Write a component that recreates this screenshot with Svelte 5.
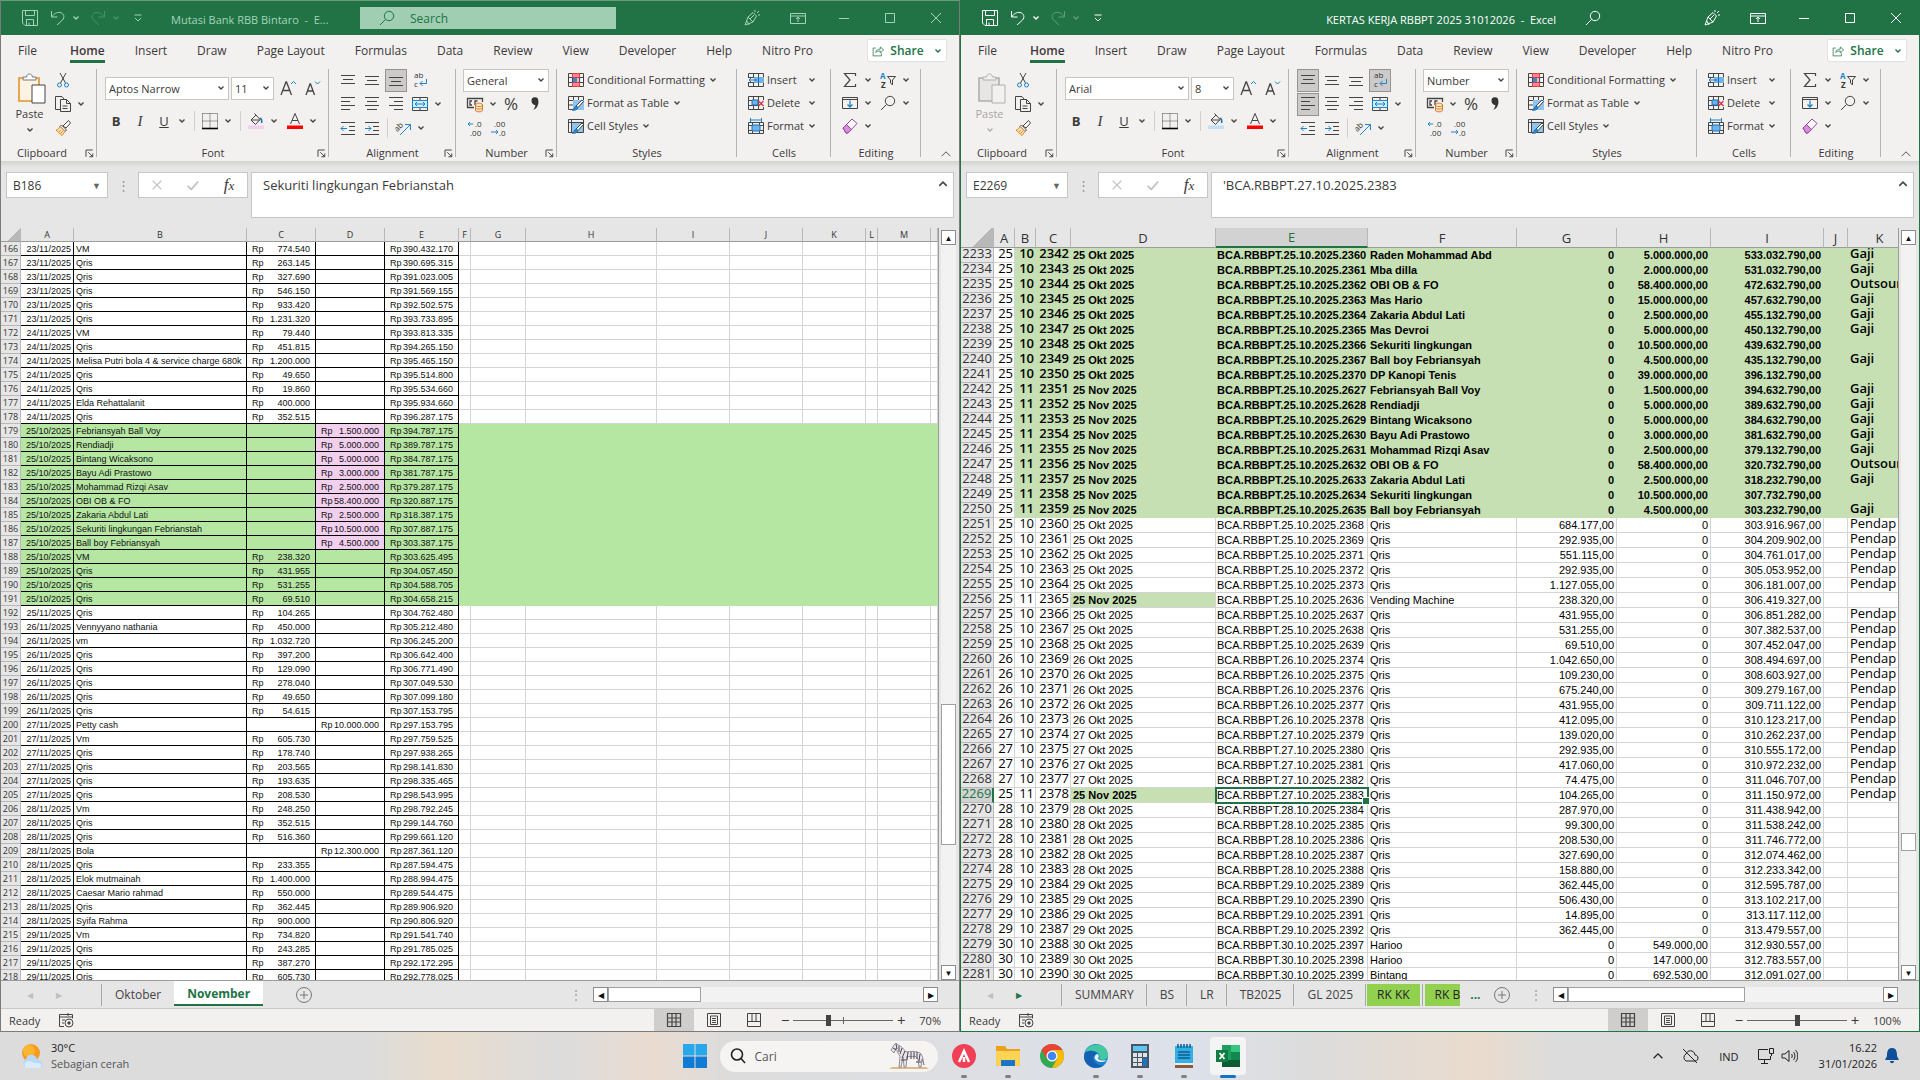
<script>
  const icons = {
    save: '<path d="M.5.5h15v15H3l-2.500-2.500zM3.500.500v5h9v-5M4.500 15.500v-6h7v6M7 12.500v3" />',
    undo: '<path d="M1.500 1v6h6M1.500 7C4 3.500 7 2 10 2.500c4 .500 5 5 2.500 7.500L7 15" />',
    redo: '<path d="M14.500 1v6h-6M14.500 7C12 3.500 9 2 6 2.500 2 3 1 7.500 3.500 10L9 15" />',
    customize: '<path d="M4.500 5h7M5 8l3 3 3-3" />',
    search: '<circle cx="10" cy="6" r="4.700" /><path d="M6.500 9.500 1 15" />',
    pen: '<path d="M1 15 4 7l5-4.500 3.500 3.500L9 12zM4 7l5 5M5 15l-2-4M11 0v2M13 3l2-2M14 5h2M6 9l4-4" />',
    display: '<path d="M.500 3.500h15v10H.500zM.500 6h15M8 12V7M6 9l2-2 2 2" />',
    min: '<path d="M3 8.500h10" />',
    max: '<path d="M3.500 3.500h9v9h-9z" />',
    close: '<path d="m3 3 10 10M13 3 3 13" />',
    share: '<path d="M5 4H1.500v10.500h11V11M5 10c.500-3 2.500-4.500 6-4.500V2.500l4.500 4-4.500 4V8C8.500 8 6.500 8.500 5 10z" />',
    cut: '<path d="m5 1 5.500 10M11 1 5.500 11" /><g stroke="#1e83c8"><circle cx="4.500" cy="13" r="2" /><circle cx="11.500" cy="13" r="2" /></g>',
    copy: '<path d="M5 13.500H.500V.500H7L9 3M5.500 3.500h6l4 4v8h-10zM11.500 3.500v4h4M7.500 10h5M7.500 12.500h5" />',
    brush: '<path d="m8 6 4-4 1.500-1.500L15.500 3 11 8zM6.500 5l5 5-1.500 1.500L5 6.500z" fill="#fff" /><path d="M5 6.500 10 11.500 7 15.500 1 10c2 0 3-1.500 4-3.500zM4 12l2-2M5.500 13.500 8 11" stroke="#e08a1e" fill="#fbe3c0" />',
    grow: '<path d="M1 15 6 2h.500L11.500 15M3 10.500h6.500" stroke-width="1.300" /><path d="m11 4 2.500-2.500L16 4" stroke="#1e83c8" />',
    shrink: '<path d="M2 15 6 4h.500L10.500 15M3.500 11h5.500" stroke-width="1.300" /><path d="M11 1.500 13.500 4 16 1.500" stroke="#1e83c8" />',
    borders: '<path d="M.500.500h15v15M.500.500v15M8 .500v15M.500 8h15" stroke-dasharray="1 1" /><path d="M0 15.500h16" stroke="#000" stroke-width="1.600" />',
    top: '<path d="M1 3.500h14M3 7.500h10M1 11.500h14" />',
    middle: '<path d="M1 4.500h14M3 8.500h10M1 12.500h14" />',
    bottom: '<path d="M1 5.500h14M3 9.500h10M1 13.500h14" />',
    left: '<path d="M1 1.500h14M1 5.500h9M1 9.500h14M1 13.500h9" />',
    center: '<path d="M1 1.500h14M3 5.500h10M1 9.500h14M3 13.500h10" />',
    right: '<path d="M1 1.500h14M6 5.500h9M1 9.500h14M6 13.500h9" />',
    outdent: '<path d="M1 2.500h14M9 6.500h6M9 10.500h6M1 14.500h14" /><path d="M7 8.500H1M3.500 6 1 8.500 3.500 11" stroke="#1e83c8" />',
    indent: '<path d="M1 2.500h14M9 6.500h6M9 10.500h6M1 14.500h14" /><path d="M1 8.500h6M4.500 6 7 8.500 4.500 11" stroke="#1e83c8" />',
    wrap: '<text x="2" y="6" class="glyph">ab</text><text x="2" y="15" class="glyph">c</text><path d="M14.500 7v4.500H8M10.500 9 8 11.500l2.500 2.500" stroke="#1e83c8" />',
    merge: '<path d="M.500 1.500h15v13H.500zM8 1.500v3M8 11.500v3" /><path d="M.500 4.500h15v7H.500z" fill="#d5ebfa" stroke="#1e83c8" /><path d="M3 8h10M5 6 3 8l2 2M11 6l2 2-2 2" stroke="#1e83c8" />',
    orient: '<text x="0" y="9" class="glyph" transform="rotate(-45 5 8)">ab</text><path d="M5 15 15 5M10 4.500h5.500V10" stroke="#1e83c8" />',
    money: '<path d="M15.500 6V2.500H.500v9H7M5 5H3v4h2M8 9V5h2.500" stroke-width="1.300" /><path d="M8.500 9c0-2.500 7-2.500 7 0v5c0 2.500-7 2.500-7 0zM8.500 9c0 2 7 2 7 0M8.500 11.500c0 2 7 2 7 0" stroke="#e07b1a" fill="#fde1c2" />',
    comma: '<path d="M4.500 5a3.300 3.300 0 0 1 6.800-.500c.700 4-1.300 8-5 9.500 1.500-2 2-3.500 2-5-2.300 0-3.800-1.800-3.800-4z" fill="#333" stroke="none" />',
    incdec: '<path d="M6 4H1M3 2 1 4l2 2" stroke="#1e83c8" /><text x="8" y="7" class="glyph">.0</text><text x="3" y="16" class="glyph">.00</text>',
    decdec: '<text x="3" y="7" class="glyph">.00</text><text x="8" y="16" class="glyph">.0</text><path d="M0 12h7M5 10l2 2-2 2" stroke="#1e83c8" />',
    cond: '<path d="M4 1h8v14H4z" fill="#f8b9bc" stroke="none" /><path d="M.500 1.500h15v13H.500zM4.500 1.500v13M11.500 1.500v13M.500 5.500h15M.500 10.500h15" /><path d="M4.500 1.500h7v4h-7zM4.500 10.500h7v4h-7z" stroke="#e03a45" fill="#f58b91" /><path d="M5 6h4v4H5z" fill="#3c87c9" stroke="none" />',
    table: '<path d="M.500 1.500h15v13H.500zM5.500 1.500v13M10.500 1.500v13M.500 5.500h15M.500 10h15" /><path d="M5 5h11v10H5z" fill="#8fc4ec" stroke="none" /><path d="m8 11 6-6 1.500 1.500L10 12.500z" fill="#fff" /><path d="M4 15c2 0 2-3 4-4l2 1.500C9 15 7 15.500 4 15z" fill="#3c87c9" stroke="#1e6bb0" />',
    cells: '<path d="M.500 1.500h15v13H.500zM3.500 1.500v13M.500 4.500h15" /><path d="M4 5h11v9H4z" fill="#8fc4ec" stroke="none" /><path d="m8 11 6-6 1.500 1.500L10 12.500z" fill="#fff" /><path d="M4 15c2 0 2-3 4-4l2 1.500C9 15 7 15.500 4 15z" fill="#3c87c9" stroke="#1e6bb0" />',
    insert: '<path d="M.500 1.500h15v13H.500zM5.500 1.500v13M10.500 1.500v13M.500 5.500h15M.500 10.500h15" /><path d="M6 5h10v6H6z" fill="#6db3ea" stroke="none" /><path d="M0 6h6v4H0z" fill="#f3f1f0" stroke="none" /><path d="M9 8H1M3.500 5.500 1 8l2.500 2.500M10.500 5v6" stroke="#1e6fb8" />',
    delete: '<path d="M15.500 5V1.500H.500v13h15V12M5.500 1.500v13M10.500 1.500v13M.500 5.500h10M.500 10.500h10" /><path d="M4 5h6v5H4z" fill="#6db3ea" stroke="#1e6fb8" /><path d="m10.500 6 5 5M15.500 6l-5 5" stroke="#e03a45" stroke-width="1.500" />',
    format: '<path d="M.500 4.500h15v11H.500zM4.500 4.500v11M11.500 4.500v11M.500 7.500h15M.500 12.500h15" /><path d="M4 7h8v6H4z" fill="#6db3ea" stroke="#1e6fb8" /><path d="M2.500 0v4M13.500 0v4M2.500 2h11" stroke="#1e83c8" />',
    sum: '<path d="M13.500 4V1.500h-11L8 8l-5.500 6.500h11V12" stroke-width="1.200" />',
    filldown: '<path d="M.500 2.500h15v11H.500zM.500 4.500h15" /><path d="M8 5.500v6M5.500 9.500 8 12l2.500-2.500" stroke="#1e83c8" stroke-width="1.300" />',
    eraser: '<path d="M1 10 10 1l5 4.500L6 15H4z" fill="#fff" stroke="#9b3fa5" /><path d="M1 10l3.500-3.500 5 5L6 15H4z" fill="#d48fd8" stroke="#9b3fa5" />',
    sort: '<text x="0" y="7" class="glyph blue">A</text><text x="1" y="16" class="glyph bold">Z</text><path d="M7.500 4.500h8L12.500 8v5L10.500 11V8z" />',
    launcher: '<path d="M4 13V4h9M7 7l6 6M13 8.500V13H8.500" />',
    macro: '<path d="M6 14.500H1.500v-12h13v4M1.500 5h13M4 8h3M4 11h2M10 1v3" /><circle cx="11" cy="11" r="4" /><circle cx="11" cy="11" r="1.200" fill="#444" />',
    normal: '<path d="M1.500 1.500h13v13h-13zM6 1.500v13M10 1.500v13M1.500 6h13M1.500 10h13" stroke-width="1.200" />',
    layout: '<path d="M1.500 1.500h13v13h-13zM4.500 4h7v8.500h-7zM6 6.500h4M6 8.500h4M6 10.500h4" />',
    pagebreak: '<path d="M1.500 1.500h13v13h-13zM6 1.500v8h4v-8M1.500 9.500h13" />',
    up: '<path d="m3 10.500 5-5 5 5" />',
    x: '<path d="m3 3 10 10M13 3 3 13" stroke-width="1.600" />',
    check: '<path d="m2 9 4 4 8-9" stroke-width="2" />'
  };

  const tabs = ['File', 'Home', 'Insert', 'Draw', 'Page Layout', 'Formulas', 'Data', 'Review', 'View', 'Developer', 'Help', 'Nitro Pro'];

  // date | description | credit | debit | balance
  const mutasi = `23/11/2025|VM|774.540||390.432.170
23/11/2025|Qris|263.145||390.695.315
23/11/2025|Qris|327.690||391.023.005
23/11/2025|Qris|546.150||391.569.155
23/11/2025|Qris|933.420||392.502.575
23/11/2025|Qris|1.231.320||393.733.895
24/11/2025|VM|79.440||393.813.335
24/11/2025|Qris|451.815||394.265.150
24/11/2025|Melisa Putri bola 4 & service charge 680k|1.200.000||395.465.150
24/11/2025|Qris|49.650||395.514.800
24/11/2025|Qris|19.860||395.534.660
24/11/2025|Elda Rehattalanit|400.000||395.934.660
24/11/2025|Qris|352.515||396.287.175
25/10/2025|Febriansyah Ball Voy||1.500.000|394.787.175
25/10/2025|Rendiadji||5.000.000|389.787.175
25/10/2025|Bintang Wicaksono||5.000.000|384.787.175
25/10/2025|Bayu Adi Prastowo||3.000.000|381.787.175
25/10/2025|Mohammad Rizqi Asav||2.500.000|379.287.175
25/10/2025|OBI OB & FO||58.400.000|320.887.175
25/10/2025|Zakaria Abdul Lati||2.500.000|318.387.175
25/10/2025|Sekuriti lingkungan Febrianstah||10.500.000|307.887.175
25/10/2025|Ball boy Febriansyah||4.500.000|303.387.175
25/10/2025|VM|238.320||303.625.495
25/10/2025|Qris|431.955||304.057.450
25/10/2025|Qris|531.255||304.588.705
25/10/2025|Qris|69.510||304.658.215
25/11/2025|Qris|104.265||304.762.480
26/11/2025|Vennyyano nathania|450.000||305.212.480
26/11/2025|vm|1.032.720||306.245.200
26/11/2025|Qris|397.200||306.642.400
26/11/2025|Qris|129.090||306.771.490
26/11/2025|Qris|278.040||307.049.530
26/11/2025|Qris|49.650||307.099.180
26/11/2025|Qris|54.615||307.153.795
27/11/2025|Petty cash||10.000.000|297.153.795
27/11/2025|Vm|605.730||297.759.525
27/11/2025|Qris|178.740||297.938.265
27/11/2025|Qris|203.565||298.141.830
27/11/2025|Qris|193.635||298.335.465
27/11/2025|Qris|208.530||298.543.995
28/11/2025|Vm|248.250||298.792.245
28/11/2025|Qris|352.515||299.144.760
28/11/2025|Qris|516.360||299.661.120
28/11/2025|Bola||12.300.000|287.361.120
28/11/2025|Qris|233.355||287.594.475
28/11/2025|Elok mutmainah|1.400.000||288.994.475
28/11/2025|Caesar Mario rahmad|550.000||289.544.475
28/11/2025|Qris|362.445||289.906.920
28/11/2025|Syifa Rahma|900.000||290.806.920
29/11/2025|Vm|734.820||291.541.740
29/11/2025|Qris|243.285||291.785.025
29/11/2025|Qris|387.270||292.172.295
29/11/2025|Qris|605.730||292.778.025`.split('\n').map((line, i) => {
    const [date, desc, credit, debit, balance] = line.split('|');
    return { no: 166 + i, date, desc, credit, debit, balance, green: i >= 13 && i <= 25, pink: i >= 13 && i <= 21 };
  });

  // day | month | reference day.number | description | in | out | balance | category
  const ledger = `25|10|25.2360|Raden Mohammad Abd|0|5.000.000,00|533.032.790,00|Gaji
25|10|25.2361|Mba dilla|0|2.000.000,00|531.032.790,00|Gaji
25|10|25.2362|OBI OB & FO|0|58.400.000,00|472.632.790,00|Outsour
25|10|25.2363|Mas Hario|0|15.000.000,00|457.632.790,00|Gaji
25|10|25.2364|Zakaria Abdul Lati|0|2.500.000,00|455.132.790,00|Gaji
25|10|25.2365|Mas Devroi|0|5.000.000,00|450.132.790,00|Gaji
25|10|25.2366|Sekuriti lingkungan|0|10.500.000,00|439.632.790,00|
25|10|25.2367|Ball boy Febriansyah|0|4.500.000,00|435.132.790,00|Gaji
25|10|25.2370|DP Kanopi Tenis|0|39.000.000,00|396.132.790,00|
25|11|25.2627|Febriansyah Ball Voy|0|1.500.000,00|394.632.790,00|Gaji
25|11|25.2628|Rendiadji|0|5.000.000,00|389.632.790,00|Gaji
25|11|25.2629|Bintang Wicaksono|0|5.000.000,00|384.632.790,00|Gaji
25|11|25.2630|Bayu Adi Prastowo|0|3.000.000,00|381.632.790,00|Gaji
25|11|25.2631|Mohammad Rizqi Asav|0|2.500.000,00|379.132.790,00|Gaji
25|11|25.2632|OBI OB & FO|0|58.400.000,00|320.732.790,00|Outsour
25|11|25.2633|Zakaria Abdul Lati|0|2.500.000,00|318.232.790,00|Gaji
25|11|25.2634|Sekuriti lingkungan|0|10.500.000,00|307.732.790,00|
25|11|25.2635|Ball boy Febriansyah|0|4.500.000,00|303.232.790,00|Gaji
25|10|25.2368|Qris|684.177,00|0|303.916.967,00|Pendap
25|10|25.2369|Qris|292.935,00|0|304.209.902,00|Pendap
25|10|25.2371|Qris|551.115,00|0|304.761.017,00|Pendap
25|10|25.2372|Qris|292.935,00|0|305.053.952,00|Pendap
25|10|25.2373|Qris|1.127.055,00|0|306.181.007,00|Pendap
25|11|25.2636|Vending Machine|238.320,00|0|306.419.327,00|
25|10|25.2637|Qris|431.955,00|0|306.851.282,00|Pendap
25|10|25.2638|Qris|531.255,00|0|307.382.537,00|Pendap
25|10|25.2639|Qris|69.510,00|0|307.452.047,00|Pendap
26|10|26.2374|Qris|1.042.650,00|0|308.494.697,00|Pendap
26|10|26.2375|Qris|109.230,00|0|308.603.927,00|Pendap
26|10|26.2376|Qris|675.240,00|0|309.279.167,00|Pendap
26|10|26.2377|Qris|431.955,00|0|309.711.122,00|Pendap
26|10|26.2378|Qris|412.095,00|0|310.123.217,00|Pendap
27|10|27.2379|Qris|139.020,00|0|310.262.237,00|Pendap
27|10|27.2380|Qris|292.935,00|0|310.555.172,00|Pendap
27|10|27.2381|Qris|417.060,00|0|310.972.232,00|Pendap
27|10|27.2382|Qris|74.475,00|0|311.046.707,00|Pendap
25|11|27.2383|Qris|104.265,00|0|311.150.972,00|Pendap
28|10|28.2384|Qris|287.970,00|0|311.438.942,00|
28|10|28.2385|Qris|99.300,00|0|311.538.242,00|
28|10|28.2386|Qris|208.530,00|0|311.746.772,00|
28|10|28.2387|Qris|327.690,00|0|312.074.462,00|
28|10|28.2388|Qris|158.880,00|0|312.233.342,00|
29|10|29.2389|Qris|362.445,00|0|312.595.787,00|
29|10|29.2390|Qris|506.430,00|0|313.102.217,00|
29|10|29.2391|Qris|14.895,00|0|313.117.112,00|
29|10|29.2392|Qris|362.445,00|0|313.479.557,00|
30|10|30.2397|Harioo|0|549.000,00|312.930.557,00|
30|10|30.2398|Harioo|0|147.000,00|312.783.557,00|
30|10|30.2399|Bintang|0|692.530,00|312.091.027,00|`.split('\n').map((line, i) => {
    const [day, month, ref, desc, inn, out, balance, cat] = line.split('|');
    const [refDay, num] = ref.split('.');
    return {
      no: 2233 + i, seq: 2342 + i, day, month, desc, inn, out, balance, cat,
      date: `${day} ${month === '11' ? 'Nov' : 'Okt'} 2025`,
      ref: `BCA.RBBPT.${refDay}.10.2025.${num}`,
      green: i < 18
    };
  });

  const mutasiCols = 'ABCDEFGHIJKLM'.split('');
  const ledgerCols = 'ABCDEFGHIJK'.split('');

  const windows = [
    { id: 'mutasi', active: false, title: 'Mutasi Bank RBB Bintaro  -  E...', font: 'Aptos Narrow', size: '11', format: 'General', cell: 'B186', formula: 'Sekuriti lingkungan Febrianstah', pressed: ['bottom'], thumb: [63.7, 19.7], hthumb: 29.5, zoom: 70, slider: 34,
      sheets: [{ name: 'Oktober' }, { name: 'November', current: true }] },
    { id: 'ledger', active: true, title: 'KERTAS KERJA RBBPT 2025 31012026  -  Excel', font: 'Arial', size: '8', format: 'Number', cell: 'E2269', formula: "'BCA.RBBPT.27.10.2025.2383", pressed: ['top', 'wrap', 'left'], thumb: [81.7, 2.4], hthumb: 56.2, zoom: 100, slider: 50,
      sheets: [{ name: 'SUMMARY' }, { name: 'BS' }, { name: 'LR' }, { name: 'TB2025' }, { name: 'GL 2025' }, { name: 'RK KK', color: true }, { name: 'RK B', color: true, cut: true }] }
  ];
</script>

{#snippet icon(name)}
  <svg class="icon" viewBox="0 0 16 16" aria-hidden="true">{@html icons[name]}</svg>
{/snippet}

{#snippet arrow()}
  <svg class="arrow" viewBox="0 0 8 8" aria-hidden="true"><path d="m1.500 2.500 2.500 2.500 2.500-2.500" /></svg>
{/snippet}

{#snippet tool(name, pressed)}
  <button class="tool" class:pressed={pressed?.includes(name)} aria-label={name}>{@render icon(name)}</button>
{/snippet}

{#snippet more(label)}
  <button class="more" aria-label="{label} options">{@render arrow()}</button>
{/snippet}

{#snippet launcher(label)}
  <button class="launcher" aria-label="{label} settings">{@render icon('launcher')}</button>
{/snippet}

{#snippet wide(name, label)}
  <button class="wide">{@render icon(name)}<span>{label}</span>{@render arrow()}</button>
{/snippet}

{#snippet rp(amount)}
  {#if amount}<div class="rp"><span>Rp</span><span>{amount}</span></div>{/if}
{/snippet}

<div class="desktop">
  <main>
    {#each windows as w}
      <section class="window {w.id}" class:active={w.active}>
        <header class="titlebar">
          <div class="quick">
            <span>{@render tool('save')}</span>
            <span>{@render tool('undo')}{@render more('Undo')}</span>
            <span class="dim">{@render tool('redo')}{@render more('Redo')}</span>
            <span>{@render tool('customize')}</span>
          </div>
          <h1>{w.title}</h1>
          {#if w.active}
            <button class="findbtn" aria-label="Search">{@render icon('search')}</button>
          {:else}
            <label class="find">{@render icon('search')}<input type="text" placeholder="Search" aria-label="Search" /></label>
          {/if}
          <div class="controls">
            {#each ['pen', 'display', 'min', 'max', 'close'] as c}
              <button aria-label={c}>{@render icon(c)}</button>
            {/each}
          </div>
        </header>

        <nav class="tabs">
          {#each tabs as t}
            <button class="tab" class:current={t === 'Home'}>{t}</button>
          {/each}
          <button class="share">{@render icon('share')}<span>Share</span>{@render arrow()}</button>
        </nav>

        <div class="ribbon">
          <div class="group clipboard">
            <div class="body">
              <button class="paste" disabled={w.active}>
                <svg viewBox="0 0 28 31" aria-hidden="true">
                  <path class="board" d="M1 5h20v23H1z" />
                  <path class="clip" d="M5 7V4h3.500C9 0 14 0 14.500 4H18v3z" />
                  <path class="page" d="M14 12h13v18H14z" />
                </svg>
                <span>Paste</span>
                {@render arrow()}
              </button>
              <div class="stack">
                <div class="row">{@render tool('cut')}</div>
                <div class="row">{@render tool('copy')}{@render more('Copy')}</div>
                <div class="row">{@render tool('brush')}</div>
              </div>
            </div>
            <div class="label">Clipboard</div>
            {@render launcher('Clipboard')}
          </div>

          <div class="group font">
            <div class="row first">
              <div class="combo name"><select aria-label="Font"><option>{w.font}</option></select>{@render arrow()}</div>
              <div class="combo size"><select aria-label="Font size"><option>{w.size}</option></select>{@render arrow()}</div>
              {@render tool('grow')}{@render tool('shrink')}
            </div>
            <div class="row second">
              <button class="tool letter"><b>B</b></button>
              <button class="tool letter"><i>I</i></button>
              <button class="tool letter"><u>U</u></button>
              {@render more('Underline')}
              <span class="sep"></span>
              {@render tool('borders')}{@render more('Borders')}
              <span class="sep"></span>
              <button class="tool" aria-label="Fill color">
                <svg class="icon" viewBox="0 0 16 16"><path d="m3 7 5-5 4 4.500-4.500 5zM8 2 6.500.500M4 7h8" /><path d="M12 5c2 1 2 3 1.500 5" stroke="#1e6fb8" stroke-width="1.600" /><path class="swatch" d="M0 12.500h16V16H0z" /></svg>
              </button>
              {@render more('Fill color')}
              <button class="tool ink" aria-label="Font color">
                <svg class="icon" viewBox="0 0 16 16"><path d="M3.500 11 8 .500 12.500 11M5 7.500h6" /><path d="M0 12.500h16V16H0z" fill="red" stroke="none" /></svg>
              </button>
              {@render more('Font color')}
            </div>
            <div class="label">Font</div>
            {@render launcher('Font')}
          </div>

          <div class="group alignment">
            <div class="row">{@render tool('top', w.pressed)}{@render tool('middle', w.pressed)}{@render tool('bottom', w.pressed)}{@render tool('wrap', w.pressed)}</div>
            <div class="row">{@render tool('left', w.pressed)}{@render tool('center', w.pressed)}{@render tool('right', w.pressed)}{@render tool('merge')}{@render more('Merge')}</div>
            <div class="row">{@render tool('outdent')}{@render tool('indent')}<span class="sep tight"></span>{@render tool('orient')}{@render more('Orientation')}</div>
            <div class="label">Alignment</div>
            {@render launcher('Alignment')}
          </div>

          <div class="group number">
            <div class="row"><div class="combo format"><select aria-label="Number format"><option>{w.format}</option></select>{@render arrow()}</div></div>
            <div class="row">{@render tool('money')}{@render more('Currency')}<button class="tool percent">%</button>{@render tool('comma')}</div>
            <div class="row">{@render tool('incdec')}{@render tool('decdec')}</div>
            <div class="label">Number</div>
            {@render launcher('Number')}
          </div>

          <div class="group styles">
            {@render wide('cond', 'Conditional Formatting')}
            {@render wide('table', 'Format as Table')}
            {@render wide('cells', 'Cell Styles')}
            <div class="label">Styles</div>
          </div>

          <div class="group cells">
            {@render wide('insert', 'Insert')}
            {@render wide('delete', 'Delete')}
            {@render wide('format', 'Format')}
            <div class="label">Cells</div>
          </div>

          <div class="group editing">
            <div class="row">{@render tool('sum')}{@render more('Sum')}{@render tool('sort')}{@render more('Sort')}</div>
            <div class="row">{@render tool('filldown')}{@render more('Fill')}{@render tool('search')}{@render more('Find')}</div>
            <div class="row">{@render tool('eraser')}{@render more('Clear')}</div>
            <div class="label">Editing</div>
          </div>
          <button class="collapse" aria-label="Collapse ribbon">{@render icon('up')}</button>
        </div>

        <div class="formula">
          <div class="namebox"><input type="text" value={w.cell} aria-label="Name box" /><span>▼</span></div>
          <span class="grip">⋮</span>
          <div class="entry">
            <button aria-label="Cancel">{@render icon('x')}</button>
            <button aria-label="Enter">{@render icon('check')}</button>
            <button class="fx"><i>f<small>x</small></i></button>
          </div>
          <div class="content">
            <textarea aria-label="Formula bar" value={w.formula}></textarea>
            <button aria-label="Collapse formula bar">{@render icon('up')}</button>
          </div>
        </div>

        <div class="sheetarea">
          <div class="grid">
            {#if w.id === 'mutasi'}
              <table>
                <colgroup><col class="m0" />{#each mutasiCols as c}<col class="m{c}" />{/each}<col /></colgroup>
                <thead><tr><th class="corner"></th>{#each mutasiCols as c}<th>{c}</th>{/each}<th></th></tr></thead>
                <tbody>
                  {#each mutasi as r}
                    <tr class:green={r.green}>
                      <th>{r.no}</th>
                      <td class="box num">{r.date}</td>
                      <td class="box">{r.desc}</td>
                      <td class="box">{@render rp(r.credit)}</td>
                      <td class="box" class:pink={r.pink}>{@render rp(r.debit)}</td>
                      <td class="box">{@render rp(r.balance)}</td>
                      {#each { length: 9 } as _}<td></td>{/each}
                    </tr>
                  {/each}
                </tbody>
              </table>
            {:else}
              <table>
                <colgroup><col class="l0" />{#each ledgerCols as c}<col class="l{c}" />{/each}</colgroup>
                <thead><tr><th class="corner"></th>{#each ledgerCols as c}<th class:selected={c === 'E'}>{c}</th>{/each}</tr></thead>
                <tbody>
                  {#each ledger as r}
                    <tr class:green={r.green} class:cursor={r.no === 2269}>
                      <th>{r.no}</th>
                      <td class="big plain">{r.day}</td>
                      <td class="big">{r.month}</td>
                      <td class="big">{r.seq}</td>
                      <td class:mark={!r.green && r.month === '11'}>{r.date}</td>
                      <td class="ref" class:selected={r.no === 2269}>{r.ref}</td>
                      <td>{r.desc}</td>
                      <td class="num">{r.inn}</td>
                      <td class="num">{r.out}</td>
                      <td class="num">{r.balance}</td>
                      <td></td>
                      <td class="big text">{r.cat}</td>
                    </tr>
                  {/each}
                </tbody>
              </table>
            {/if}
          </div>
          <div class="vscroll">
            <button aria-label="Scroll up">▲</button>
            <div class="track"><div class="thumb" style="top: {w.thumb[0]}%; height: {w.thumb[1]}%"></div></div>
            <button aria-label="Scroll down">▼</button>
          </div>
        </div>

        <div class="sheets">
          <div class="nav"><button aria-label="Previous sheet">◀</button><button class:on={w.active} aria-label="Next sheet">▶</button></div>
          {#each w.sheets as s}
            <button class="sheet" class:current={s.current} class:color={s.color} class:cut={s.cut}><span>{s.name}</span></button>
          {/each}
          {#if w.active}<span class="dots">...</span>{/if}
          <button class="add" aria-label="New sheet">
            <svg viewBox="0 0 16 16"><circle cx="8" cy="8" r="7.500" /><path d="M8 4v8M4 8h8" /></svg>
          </button>
          <span class="grip">⋮</span>
          <div class="hscroll">
            <button aria-label="Scroll left">◀</button>
            <div class="track"><div class="thumb" style="width: {w.hthumb}%"></div></div>
            <button aria-label="Scroll right">▶</button>
          </div>
        </div>

        <footer class="status">
          <span>Ready</span>
          {@render icon('macro')}
          <div class="views">
            <button class="on" aria-label="Normal">{@render icon('normal')}</button>
            <button aria-label="Page layout">{@render icon('layout')}</button>
            <button aria-label="Page break">{@render icon('pagebreak')}</button>
          </div>
          <button class="step" aria-label="Zoom out">−</button>
          <input type="range" value={w.slider} aria-label="Zoom" />
          <button class="step" aria-label="Zoom in">+</button>
          <output>{w.zoom}%</output>
        </footer>
      </section>
    {/each}
  </main>

  <div class="taskbar">
    <button class="weather">
      <svg viewBox="0 0 24 26" aria-hidden="true">
        <circle cx="11" cy="10" r="9" fill="#f79a1e" /><circle cx="9" cy="8" r="6" fill="#fbb62f" />
        <path d="M6 25a5 5 0 0 1 0-9c1-5 9-6 11 0 7 0 7 9 1 9z" fill="#b9d9fa" /><path d="M6 25a4 4 0 0 1 0-6c4-3 6 2 12 1 4 0 4 5 0 5z" fill="#dcebfd" />
      </svg>
      <span><b>30°C</b><small>Sebagian cerah</small></span>
    </button>
    <div class="middle">
      <button class="start" aria-label="Start">
        <svg viewBox="0 0 24 24"><path d="M0 0h11.500v11.500H0zM12.500 0H24v11.500H12.500z" fill="#28a8ea" /><path d="M0 12.500h11.500V24H0zM12.500 12.500H24V24H12.500z" fill="#0f7bd3" /></svg>
      </button>
      <label class="cari">
        <svg viewBox="0 0 16 16"><circle cx="7" cy="6.500" r="5.500" /><path d="m11 10.500 4 4.500" /></svg>
        <input type="text" placeholder="Cari" aria-label="Cari" />
        <svg class="zebra" viewBox="0 0 42 28">
          <path d="M4 25h34l3 2H1z" fill="#dcb98a" />
          <path d="m3 8 3-5 2-2 2 2c4 1 6 5 8 7 5-1 10-1 14 1 3 2 3 8 4 12l-2-6-1 8h-2l-1-8-3-3c-3 1-6 1-8 0l-1 11h-2l-1-10-2 10h-2l1-11c-3-3-3-6-4-8L6 11z" fill="#eae6ea" stroke="#6d6574" stroke-width=".7" />
          <path d="m8 2 1 5M11 4v6M14 6l-2 6M17 9l-3 7M20 10l-1 8M23 10v7M26 10v7M29 10v7M32 12l-1 7M13 18h5M28 20h5M5 6l3 2" fill="none" stroke="#4d4554" />
        </svg>
      </label>
      <button class="app run" aria-label="Anydesk">
        <svg viewBox="0 0 24 24"><circle cx="12" cy="12" r="12" fill="#ef4056" /><path d="m7 18 5-11 5 11M12 13v5" fill="none" stroke="#fff" stroke-width="2.500" /></svg>
      </button>
      <button class="app run" aria-label="File Explorer">
        <svg viewBox="0 0 24 24"><path d="M0 2h9l2 3h13v17H0z" fill="#e9a21b" /><path d="M0 7h24v14l-1 1H1l-1-1z" fill="#fcd354" /><path d="M5 16h14v6H5z" fill="#1976c5" /></svg>
      </button>
      <button class="app" aria-label="Chrome">
        <svg viewBox="0 0 24 24"><circle cx="12" cy="12" r="12" fill="#35a853" /><path d="M1.600 6A12 12 0 0 1 22.400 6H12L7 15z" fill="#ea4335" /><path d="M22.400 6A12 12 0 0 1 12 24l5-9V9L12 6z" fill="#fbbc05" /><circle cx="12" cy="12" r="5.500" fill="#fff" /><circle cx="12" cy="12" r="4.300" fill="#4285f4" /></svg>
      </button>
      <button class="app run" aria-label="Edge">
        <svg viewBox="0 0 24 24"><circle cx="12" cy="12" r="12" fill="#1b7fd0" /><path d="M1 8C5-2 22-3 24 11c0 5-6 6-9 4 3-5-4-11-14-7z" fill="#43c9a1" /><path d="M1 9c5-4 11-2 12 1-5 0-6 8 2 11 3 1 6 0 7-2-6 8-20 6-22-5z" fill="#1560b3" /><path d="M13 10c-4 2-3 7 3 8 3 0 5 0 7-2-3 1-9 1-9-2 2-2 0-4-1-4z" fill="#eaf6fb" /></svg>
      </button>
      <button class="app run" aria-label="Calculator">
        <svg viewBox="0 0 24 24"><path d="M3 0h18v24H3z" fill="#4b5560" /><path d="M5 2h14v5H5z" fill="#5cc7f2" /><path d="M5 9h4v4H5zM10 9h4v4h-4zM15 9h4v4h-4zM5 14h4v4H5zM10 14h4v4h-4zM5 19h4v3H5zM10 19h4v3h-4z" fill="#dde3e8" /><path d="M15 14h4v8h-4z" fill="#1976c5" /></svg>
      </button>
      <button class="app run" aria-label="Notepad">
        <svg viewBox="0 0 24 24"><path d="M3 2h18v20H3z" fill="#35aee4" /><path d="M3 21h18v3H3z" fill="#8a5a3c" /><path d="M3 19h18v2H3z" fill="#e9eef2" /><path d="M6 0v4M9 0v4M12 0v4M15 0v4M18 0v4M6 8h12M6 11h12M6 14h12" stroke="#0b5c8e" stroke-width="1.500" /></svg>
      </button>
      <button class="app run open" aria-label="Excel">
        <svg viewBox="0 0 24 24"><path d="M6 1h9v22H6z" fill="#1d9f61" /><path d="M15 1h9v7h-9z" fill="#36c481" /><path d="M15 8h9v8h-9z" fill="#12884f" /><path d="M6 16h18v7H6z" fill="#0c5c36" /><path d="M0 6h12v12H0z" fill="#107c41" /><path d="m3.500 9 5 6M8.500 9l-5 6" stroke="#fff" stroke-width="1.800" /></svg>
      </button>
    </div>
    <div class="tray">
      <button aria-label="Hidden icons">{@render icon('up')}</button>
      <button class="cloud" aria-label="OneDrive"><svg viewBox="0 0 18 18"><path d="M5 14a4 4 0 0 1 0-7c1-4 8-5 9 1 4 0 4 6 0 6zM2 2l14 14" /></svg></button>
      <button class="lang">IND</button>
      <button class="net" aria-label="Network and volume">
        <svg viewBox="0 0 18 18"><path d="M11 2.500H1.500v10h12V9M4 16.500h7M7.500 12.500v4M12.500 1.500h4v5h-4zM14.500 6.500V9" /></svg>
        <svg viewBox="0 0 18 18"><path d="M2 7h3l4-3.500v11L5 11H2zM11.500 7c1 1 1 3 0 4M13.500 5c2 2 2 6 0 8M15.500 3c3 3 3 9 0 12" /></svg>
      </button>
      <button class="clock"><span>16.22</span><span>31/01/2026</span></button>
      <button class="bell" aria-label="Notifications"><svg viewBox="0 0 16 18"><path d="M8 1C3 1 3 6 3 9l-2 4h14l-2-4c0-3 0-8-5-8zM6 14h4c0 3-4 3-4 0z" /></svg></button>
    </div>
  </div>
</div>

<style>
  :global(body) { margin: 0; overflow: hidden; }
  .desktop { display: flex; flex-direction: column; height: 100vh; font-family: 'Open Sans', 'Noto Sans', sans-serif; font-size: 11px; color: #3b3a39; }
  .desktop * { box-sizing: border-box; }
  main { flex: 1; min-height: 0; display: flex; }
  button, input, select, textarea { font: inherit; color: inherit; border: 0; padding: 0; margin: 0; background: none; border-radius: 0; outline: none; }
  button { white-space: nowrap; }
  svg { fill: none; stroke: currentColor; flex: none; }
  .icon { width: 16px; height: 16px; stroke: #444; display: block; overflow: visible; }
  .icon :global(.glyph) { font: 8px 'Open Sans', sans-serif; fill: #333; stroke: none; }
  .icon :global(.glyph.bold) { font-weight: 700; }
  .icon :global(.glyph.blue) { font-weight: 700; fill: #1e83c8; }
  .arrow { width: 8px; height: 8px; stroke: #444; stroke-width: 1.4; display: block; }

  .window { flex: 1; min-width: 0; display: flex; flex-direction: column; border: 1px solid #7b7b7b; border-top-color: #6c9a7f; background: #f3f1f0; }
  .window.active { border-color: #217346; }

  /* title bar */
  .titlebar { display: flex; align-items: center; height: 34px; flex: none; background: #217346; color: #a3d3b8; font-size: 12px; }
  .active .titlebar { color: #fff; }
  .titlebar .icon, .titlebar .arrow { stroke: currentColor; }
  .quick { display: flex; gap: 4px; padding-left: 17px; }
  .quick span { display: flex; }
  .dim { opacity: 0.3; }
  h1 { margin: 0; padding: 2px 0 0 21px; width: 210px; font-size: 11px; font-weight: 400; white-space: pre; }
  .active h1 { flex: 1; width: auto; text-align: right; }
  .find { display: flex; align-items: center; gap: 15px; width: 256px; height: 22px; padding-left: 19px; background: #a0ceb3; color: #217346; }
  .find input { width: 180px; }
  .find input::placeholder { color: #217346; opacity: 1; }
  .findbtn { width: 74px; margin-right: 59px; display: grid; place-items: center; }
  .controls { display: flex; margin-left: auto; }
  .active .controls { margin-left: 0; }
  .controls button { width: 46px; height: 34px; display: grid; place-items: center; }

  /* ribbon */
  .tabs { display: flex; align-items: flex-start; height: 31px; flex: none; padding: 0 12px 0 2px; font-size: 12px; }
  .tab { height: 28px; margin: 0 15px; padding-top: 6px; border-bottom: 3px solid transparent; line-height: 19px; }
  .tab:first-child { margin-right: 18px; }
  .tab.current { font-weight: 600; border-color: #217346; }
  .share { display: flex; align-items: center; justify-content: center; gap: 6px; width: 80px; height: 23px; margin: 4px 0 0 auto; background: #fff; border: 1px solid #e4e2e0; border-radius: 2px; color: #217346; font-weight: 600; }
  .share .icon { width: 12px; height: 12px; stroke: #217346; }
  .share .arrow { margin-left: 4px; stroke: #217346; }
  .ribbon { display: flex; height: 95px; flex: none; padding-top: 2px; position: relative; }
  .group { position: relative; flex: none; padding-left: 7px; background: linear-gradient(#b5b3b2, #b5b3b2) no-repeat right 1px / 1px 88px; }
  .label { position: absolute; left: 0; right: 0; top: 77px; line-height: 16px; text-align: center; }
  .launcher { position: absolute; right: 2px; top: 79px; width: 12px; height: 12px; }
  .launcher .icon { width: 12px; height: 12px; stroke-width: 1.3; }
  .row { display: flex; align-items: center; height: 24px; }
  .tool { width: 24px; height: 24px; display: grid; place-items: center; flex: none; }
  .tool.pressed { width: 22px; height: 23px; margin: 0 1px; background: #cdcbca; border: 1px solid #979593; }
  .more { width: 12px; height: 24px; display: grid; place-items: center; flex: none; }
  .sep { width: 1px; height: 20px; margin: 0 3px 0 6px; background: #d2d0ce; }
  .sep.tight { margin: 0 3px; }
  .clipboard { width: 96px; }
  .clipboard .label { right: 14px; }
  .body { display: flex; }
  .paste { width: 43px; display: flex; flex-direction: column; align-items: center; padding-top: 5px; line-height: 20px; }
  .paste svg:first-child { width: 28px; height: 31px; margin-left: 4px; }
  .paste .arrow { margin-top: 2px; }
  .board { fill: #fdf3e2; stroke: #e3922d; stroke-width: 1.6; }
  .clip { fill: #fff; stroke: #777; }
  .page { fill: #fff; stroke: #444; }
  .paste:disabled { color: #a8a6a4; }
  .paste:disabled .board { fill: #e8e6e5; stroke: #b0aeac; }
  .paste:disabled .clip, .paste:disabled .page { fill: #f3f1f0; stroke: #b0aeac; }
  .paste:disabled .arrow { stroke: #b0aeac; }
  .font { width: 232px; }
  .font .first { padding-top: 9px; height: 31px; }
  .font .second { padding-top: 12px; height: 32px; }
  .combo { display: flex; align-items: center; height: 23px; padding: 0 3px; background: #fff; border: 1px solid #c8c6c4; }
  .combo select { flex: 1; min-width: 0; appearance: none; }
  .combo.name { width: 124px; margin: 0 2px 0 1px; }
  .combo.size { width: 43px; margin-right: 2px; }
  .combo.format { width: 86px; }
  .letter { font-size: 13px; line-height: 16px; }
  .letter i { font-family: 'Liberation Serif', serif; font-size: 15px; }
  .swatch { fill: #f2ceef; stroke: none; }
  .active .swatch { fill: #c5e0f5; }
  .ink { margin-left: 3px; }
  .alignment { width: 127px; }
  .number { width: 101px; }
  .percent { font-size: 17px; line-height: 20px; }
  .styles { width: 180px; padding-left: 11px; }
  .cells { width: 94px; padding-left: 11px; }
  .wide { display: flex; align-items: center; gap: 3px; height: 23px; }
  .wide .arrow { margin-left: 1px; }
  .cells .wide { width: 68px; }
  .cells .arrow { margin-left: auto; }
  .editing { width: 90px; }
  .editing .row { height: 23px; }
  .editing .more { margin-right: 2px; }
  .collapse { position: absolute; right: 6px; bottom: 0; width: 14px; height: 14px; }
  .collapse .icon { width: 14px; height: 14px; }

  /* formula bar */
  .formula { display: flex; align-items: flex-start; height: 67px; flex: none; padding: 11px 5px 0 5px; background: linear-gradient(#d2d1d0, #e6e6e6 6px); font-size: 13px; }
  .namebox { display: flex; align-items: center; width: 102px; height: 26px; padding: 0 6px; background: #fff; border: 1px solid #c6c6c6; font-size: 12px; }
  .namebox input { flex: 1; min-width: 0; }
  .namebox span { font-size: 9px; color: #666; }
  .grip { width: 30px; text-align: center; line-height: 26px; color: #999; }
  .entry { display: flex; width: 110px; height: 26px; background: #fff; border: 1px solid #c6c6c6; }
  .entry button { flex: 1; display: grid; place-items: center; }
  .entry .icon { width: 14px; height: 14px; stroke: #c2c2c2; }
  .fx i { font: italic 17px 'Liberation Serif', serif; }
  .fx small { font-size: 13px; }
  .content { flex: 1; display: flex; height: 46px; margin-left: 3px; background: #fff; border: 1px solid #c6c6c6; }
  .content textarea { flex: 1; padding: 2px 11px; line-height: 20px; resize: none; overflow: hidden; }
  .content button { width: 16px; height: 22px; }
  .content .icon { width: 12px; height: 12px; stroke-width: 2; }

  /* cells */
  .sheetarea { flex: 1; min-height: 0; display: flex; background: #e6e6e6; border-bottom: 1px solid #9c9c9c; }
  .grid { flex: 1; min-width: 0; overflow: hidden; border-right: 1px solid #9c9c9c; }
  table { width: 100%; table-layout: fixed; border-collapse: separate; border-spacing: 0; background: #fff; color: #111; }
  th { padding: 0; font-weight: 400; text-align: center; background: #e6e6e6; color: #333; border-right: 1px solid #b8b8b8; border-bottom: 1px solid #b8b8b8; overflow: hidden; }
  thead th { border-bottom-color: #9c9c9c; }
  .corner { background: linear-gradient(135deg, #e6e6e6 60%, #b8b8b8 60%); }
  td { padding: 0 2px; border-right: 1px solid #d4d4d4; border-bottom: 1px solid #d4d4d4; white-space: nowrap; overflow: hidden; }
  .num { text-align: right; }
  .mutasi table { font: 9px 'Liberation Sans', Arial, sans-serif; }
  .mutasi th, .mutasi td { height: 14px; line-height: 12px; padding-top: 1px; }
  .mutasi th { font-family: 'Open Sans', sans-serif; }
  .mutasi .green td { background: #b5e6a2; border-color: #b5e6a2; }
  .mutasi td.box, .mutasi .green td.box { border-color: #000; }
  .mutasi .green td.pink { background: #f2ceef; }
  .rp { display: flex; justify-content: space-between; padding: 0 3px; }
  .m0 { width: 20px; }
  .mA { width: 53px; }
  .mB { width: 173px; }
  .mC, .mD { width: 69px; }
  .mE { width: 74px; }
  .mF, .mL { width: 12px; }
  .mG { width: 55px; }
  .mH { width: 131px; }
  .mI, .mJ { width: 73px; }
  .mK { width: 63px; }
  .mM { width: 53px; }
  .ledger table { font: 11px 'Liberation Sans', Arial, sans-serif; color: #000; }
  .ledger th, .ledger td { height: 15px; line-height: 14px; }
  .ledger th { font: 13px 'Open Sans', sans-serif; line-height: 11px; padding-bottom: 3px; }
  .ledger thead th { height: 20px; line-height: 18px; padding: 0; }
  .ledger td.big { font: 13px 'Open Sans', sans-serif; line-height: 11px; padding: 0 1px 3px; text-align: right; }
  .ledger td.text { text-align: left; padding-left: 2px; }
  .ledger td.ref { padding: 0 0 0 1px; }
  .ledger .green td { background: #c6e0b4; border-color: #c6e0b4; font-weight: 700; }
  .ledger .green td.big { font-weight: 600; }
  .ledger .green td.plain { background: #fff; border-color: #d4d4d4; font-weight: 400; }
  .ledger td.mark { background: #c6e0b4; font-weight: 700; }
  .ledger thead .selected { background: #d2d2d2; color: #217346; border-bottom: 2px solid #217346; }
  .ledger .cursor th { background: #d2d2d2; color: #217346; border-right: 2px solid #217346; }
  td.selected { position: relative; overflow: visible; outline: 2px solid #217346; outline-offset: -1px; }
  td.selected::after { content: ''; position: absolute; right: -3px; bottom: -3px; width: 6px; height: 6px; background: #217346; border: 1px solid #fff; }
  .l0 { width: 33px; }
  .lA, .lB { width: 21px; }
  .lC { width: 35px; }
  .lD { width: 145px; }
  .lE { width: 152px; }
  .lF { width: 149px; }
  .lG { width: 100px; }
  .lH { width: 94px; }
  .lI { width: 113px; }
  .lJ { width: 24px; }
  .lK { width: 64px; }

  /* scroll bars */
  .vscroll { width: 20px; display: flex; flex-direction: column; padding: 2px 3px 0 2px; }
  .vscroll button, .hscroll button { width: 15px; height: 15px; flex: none; display: grid; place-items: center; background: #fff; border: 1px solid #8c8c8c; color: #111; font-size: 8px; line-height: 8px; }
  .track { flex: 1; position: relative; background: #f2f2f2; }
  .vscroll .track { width: 15px; }
  .thumb { position: absolute; left: 0; width: 15px; background: #fff; border: 1px solid #a0a0a0; }
  .hscroll { width: 345px; display: flex; margin-right: 21px; }
  .hscroll .thumb { top: 0; height: 15px; }

  /* sheet tabs */
  .sheets { display: flex; align-items: center; height: 28px; flex: none; background: #e6e6e6; border-bottom: 1px solid #c8c8c8; font-size: 12px; }
  .nav { display: flex; align-items: center; width: 101px; height: 22px; padding-left: 14px; border-right: 1px solid #a8a8a8; }
  .nav button { width: 29px; color: #c0c0c0; font-size: 8px; }
  .nav .on { color: #217346; }
  .sheets .sheet { height: 22px; padding: 0 12px 0 13px; border-right: 1px solid #a8a8a8; color: #444; }
  .sheets .current { height: 25px; align-self: flex-start; padding: 2px 13px 0; background: #fff; border: 0; border-bottom: 2px solid #217346; color: #217346; font-weight: 700; }
  .sheets .color { padding: 0 2px 0 1px; color: #222; }
  .color span { display: block; padding: 0 10px; line-height: 22px; background: #92d050; }
  .sheets .cut { border: 0; padding: 0 0 0 2px; }
  .cut span { padding-right: 0; }
  .mutasi .sheet:not(.current) { border: 0; padding: 0 13px; }
  .dots { padding-left: 10px; color: #217346; font-weight: 700; }
  .add { width: 16px; height: 16px; margin-left: 14px; }
  .mutasi .add { margin-left: 33px; }
  .add svg { width: 16px; height: 16px; stroke: #777; display: block; }
  .sheets .grip { margin-left: auto; width: 34px; }

  /* status bar */
  .status { display: flex; align-items: center; height: 22px; flex: none; padding: 0 18px 0 8px; }
  .status > .icon { margin-left: 18px; }
  .views { display: flex; margin-left: auto; margin-right: 3px; }
  .views button { width: 40px; height: 22px; display: grid; place-items: center; }
  .views .on { background: #d0cecd; }
  .step { width: 16px; font-size: 15px; line-height: 20px; }
  input[type='range'] { appearance: none; width: 100px; height: 20px; background: linear-gradient(#666, #666) no-repeat center / 100% 1px, linear-gradient(#666, #666) no-repeat center / 1px 7px; }
  input[type='range']::-webkit-slider-thumb { appearance: none; width: 5px; height: 11px; background: #444; }
  output { margin-left: 10px; }

  /* taskbar */
  .taskbar { display: grid; grid-template-columns: 1fr auto 1fr; align-items: center; height: 48px; flex: none; color: #222; background: linear-gradient(90deg, #dcdcdc 19%, #e8dccd 23%, #dcdcdc 29%, #e9dbd0 34%, #dcdcdc 38%, #dde1ea 62%, #dcdcdc 68%, #e9dbcd 77%, #dcdcdc 81%); }
  .weather { display: flex; align-items: center; gap: 7px; padding-left: 20px; text-align: left; }
  .weather svg { width: 24px; height: 26px; stroke: none; }
  .weather b, .weather small { display: block; font-size: 11px; font-weight: 400; line-height: 16px; }
  .weather small { color: #555; }
  .middle { display: flex; align-items: center; margin-left: 12px; }
  .start svg { width: 24px; height: 24px; stroke: none; display: block; }
  .start { margin-right: 13px; }
  .cari { display: flex; align-items: center; width: 218px; height: 31px; margin-right: 4px; padding: 0 8px 0 10px; background: #f6f4f3; border-radius: 16px; }
  .cari svg { width: 16px; height: 16px; stroke-width: 1.6; }
  .cari input { flex: 1; min-width: 0; margin-left: 9px; font-size: 12px; }
  .cari input::placeholder { color: #555; opacity: 1; }
  .cari .zebra { width: 42px; height: 28px; stroke: none; stroke-width: 1; }
  .app { position: relative; width: 36px; height: 38px; margin: 0 4px; display: grid; place-items: center; border-radius: 4px; }
  .app svg { width: 24px; height: 24px; stroke: none; }
  .run::after { content: ''; position: absolute; left: 15px; bottom: -3px; width: 6px; height: 3px; border-radius: 2px; background: #808080; }
  .open { background: #f4f4f4; }
  .run.open::after { left: 10px; width: 16px; background: #1273c4; }
  .tray { display: flex; align-items: center; justify-content: flex-end; padding-right: 20px; }
  .tray svg { width: 18px; height: 18px; stroke: #222; display: block; }
  .tray .icon { width: 14px; height: 14px; stroke-width: 1.5; }
  .cloud { margin-left: 16px; }
  .lang { margin-left: 20px; }
  .net { display: flex; gap: 5px; margin-left: 18px; }
  .clock { margin-left: 21px; text-align: right; }
  .clock span { display: block; line-height: 16px; }
  .bell { margin-left: 7px; }
  .tray .bell svg { width: 16px; fill: #0f4f9a; stroke: none; }
</style>
